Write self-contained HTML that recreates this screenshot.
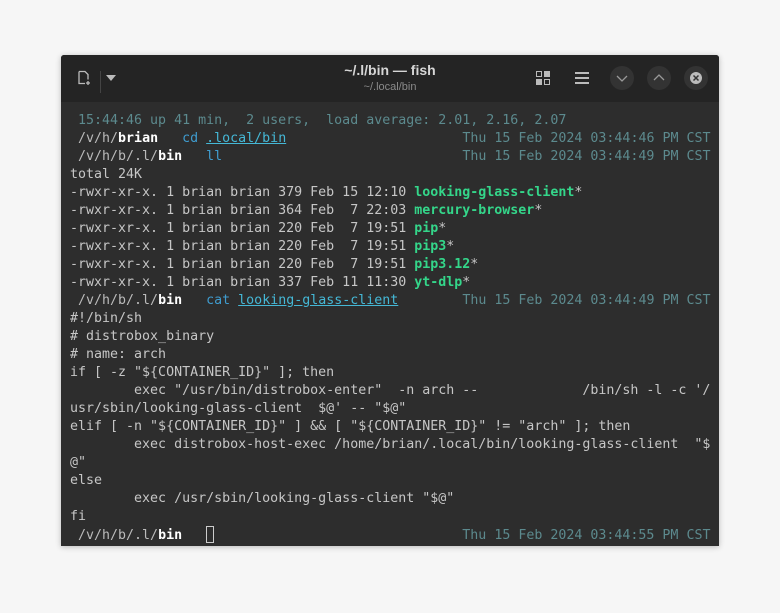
<!DOCTYPE html>
<html><head><meta charset="utf-8"><style>
html,body{margin:0;width:780px;height:613px;background:#f6f6f6;overflow:hidden}
.win{position:absolute;left:61px;top:55px;width:658px;height:491px;background:#2d2d2d;box-shadow:0 1px 6px rgba(0,0,0,.25);border-radius:3px 3px 0 0;overflow:hidden}
.hdr{position:absolute;left:0;top:0;width:658px;height:47px;background:#242424}
.title{position:absolute;left:0;width:658px;text-align:center;font-family:"Liberation Sans",sans-serif}
.t1{top:7px;color:#d6d6d6;font-weight:bold;font-size:14px}
.t2{top:26px;color:#8a8a8a;font-size:11px}
.circ{position:absolute;top:11px;width:24px;height:24px;border-radius:50%;background:#333}
pre{position:absolute;left:9px;top:57px;margin:0;font-family:"DejaVu Sans Mono","Liberation Mono",monospace;font-size:13.3px;line-height:18px;color:#c6c6c6;letter-spacing:0}
.d{color:#5c8a8e}.c{color:#3f9ccf}.u{color:#45b8d6;text-decoration:underline}.w{color:#fff;font-weight:bold}.p{color:#bbb}
.g{color:#34d68a;font-weight:bold}
.s{font-size:10px}
.cur{display:inline-block;width:8px;height:17px;border:1px solid #ccc;box-sizing:border-box;vertical-align:-4px}
</style></head><body>
<div class="win">
<div class="hdr">
<svg style="position:absolute;left:15px;top:15px" width="16" height="16" viewBox="0 0 16 16" fill="none" stroke="#bbb" stroke-width="1.3"><path d="M3 1.5h6l3 3v5M3 1.5v12h6"/><path d="M12 11v4M10 13h4"/></svg>
<div style="position:absolute;left:39px;top:16px;width:1px;height:22px;background:#444"></div>
<svg style="position:absolute;left:45px;top:20px" width="10" height="6"><path d="M0 0h10L5 6z" fill="#bbb"/></svg>
<div class="title t1">~/.l/bin — fish</div>
<div class="title t2">~/.local/bin</div>
<svg style="position:absolute;left:475px;top:16px" width="14" height="14"><rect x="0.5" y="0.5" width="5" height="5" fill="none" stroke="#bbb"/><rect x="8" y="0" width="6" height="6" fill="#bbb"/><rect x="0" y="8" width="6" height="6" fill="#bbb"/><rect x="8.5" y="8.5" width="5" height="5" fill="none" stroke="#bbb"/></svg>
<svg style="position:absolute;left:514px;top:17px" width="14" height="12"><rect y="0" width="14" height="2" fill="#bbb"/><rect y="5" width="14" height="2" fill="#bbb"/><rect y="10" width="14" height="2" fill="#bbb"/></svg>
<div class="circ" style="left:549px"><svg width="24" height="24"><path d="M7 10l5 5 5-5" fill="none" stroke="#999" stroke-width="1.3"/></svg></div>
<div class="circ" style="left:586px"><svg width="24" height="24"><path d="M7 14l5-5 5 5" fill="none" stroke="#999" stroke-width="1.3"/></svg></div>
<div class="circ" style="left:623px"><svg width="24" height="24"><circle cx="12" cy="12" r="6" fill="#bbb"/><path d="M9.5 9.5l5 5M14.5 9.5l-5 5" stroke="#333" stroke-width="1.5"/></svg></div>
</div>
<pre><span class="d"> 15:44:46 up 41 min,  2 users,  load average: 2.01, 2.16, 2.07</span>
<span class="p"> /v/h/</span><span class="w">brian</span>   <span class="c">cd</span> <span class="u">.local/bin</span>                      <span class="d">Thu 15 Feb 2024 03:44:46 PM CST</span>
<span class="p"> /v/h/b/.l/</span><span class="w">bin</span>   <span class="c">ll</span>                              <span class="d">Thu 15 Feb 2024 03:44:49 PM CST</span>
total 24K
-rwxr-xr-x. 1 brian brian 379 Feb 15 12:10 <span class="g">looking-glass-client</span>*
-rwxr-xr-x. 1 brian brian 364 Feb  7 22:03 <span class="g">mercury-browser</span>*
-rwxr-xr-x. 1 brian brian 220 Feb  7 19:51 <span class="g">pip</span>*
-rwxr-xr-x. 1 brian brian 220 Feb  7 19:51 <span class="g">pip3</span>*
-rwxr-xr-x. 1 brian brian 220 Feb  7 19:51 <span class="g">pip3.12</span>*
-rwxr-xr-x. 1 brian brian 337 Feb 11 11:30 <span class="g">yt-dlp</span>*
<span class="p"> /v/h/b/.l/</span><span class="w">bin</span>   <span class="c">cat</span> <span class="u">looking-glass-client</span>        <span class="d">Thu 15 Feb 2024 03:44:49 PM CST</span>
#!/bin/sh
# distrobox_binary
# name: arch
if [ -z "${CONTAINER_ID}" ]; then
        exec "/usr/bin/distrobox-enter"  -n arch --             /bin/sh -l -c '/
usr/sbin/looking-glass-client  $@' -- "$@"
elif [ -n "${CONTAINER_ID}" ] &amp;&amp; [ "${CONTAINER_ID}" != "arch" ]; then
        exec distrobox-host-exec /home/brian/.local/bin/looking-glass-client  "$
@"
else
        exec /usr/sbin/looking-glass-client "$@"
fi
<span class="p"> /v/h/b/.l/</span><span class="w">bin</span>   <span class="cur"></span>                               <span class="d">Thu 15 Feb 2024 03:44:55 PM CST</span></pre>
</div>
</body></html>
